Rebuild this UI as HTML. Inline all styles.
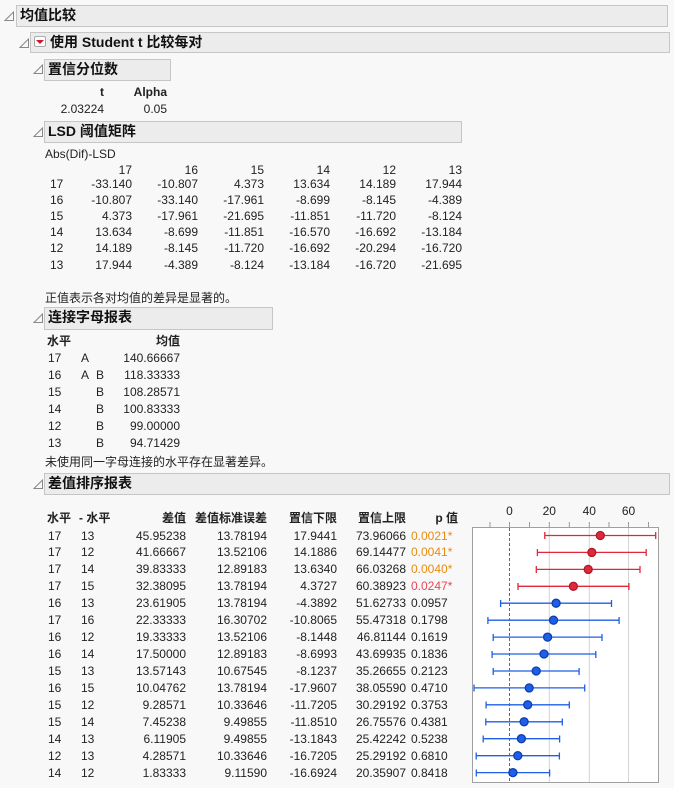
<!DOCTYPE html>
<html><head><meta charset="utf-8"><style>
*{margin:0;padding:0;box-sizing:border-box}
body{width:674px;height:788px;background:#f8f8f8;font-family:"Liberation Sans","Noto Sans CJK SC",sans-serif;font-size:12px;color:#222;position:relative;overflow:hidden}
.a{position:absolute;white-space:nowrap;line-height:16px}
.h{position:absolute;background:#ececec;border:1px solid #c6c6c6;font-weight:bold;font-size:14px;line-height:19px;padding-left:3px;color:#111}
.tri{position:absolute;width:10px;height:10px}
.r{text-align:right}
.row{position:absolute;left:0;height:16.93px;line-height:16.93px;width:470px}
.row span{position:absolute;white-space:nowrap}
.o{color:#e98b0f}.rd{color:#e8475a}
b{font-weight:bold}
</style></head><body>
<svg width="0" height="0" style="position:absolute"><defs><symbol id="t" viewBox="0 0 10 10"><path d="M1 9.5H9.5V1Z" fill="none" stroke="#888" stroke-width="1"/></symbol></defs></svg>

<svg class="tri" style="left:4px;top:11px"><use href="#t"/></svg>
<div class="h" style="left:16px;top:5px;width:652px;height:22px">均值比较</div>

<svg class="tri" style="left:19px;top:38px"><use href="#t"/></svg>
<div class="h" style="left:30px;top:32px;width:640px;height:21px;padding-left:19px">使用 Student t 比较每对</div>
<div style="position:absolute;left:34px;top:36px;width:12px;height:11px;background:#fff;border:1px solid #aaa;border-radius:2px"></div>
<div style="position:absolute;left:36px;top:40px;width:0;height:0;border-left:4px solid transparent;border-right:4px solid transparent;border-top:4px solid #d0152a"></div>

<svg class="tri" style="left:33px;top:64px"><use href="#t"/></svg>
<div class="h" style="left:44px;top:59px;width:127px;height:22px">置信分位数</div>
<div class="a r" style="left:60px;top:84px;width:44px"><b>t</b></div>
<div class="a r" style="left:110px;top:84px;width:57px"><b>Alpha</b></div>
<div class="a r" style="left:40px;top:101px;width:64px">2.03224</div>
<div class="a r" style="left:110px;top:101px;width:57px">0.05</div>

<svg class="tri" style="left:33px;top:127px"><use href="#t"/></svg>
<div class="h" style="left:44px;top:121px;width:418px;height:22px">LSD 阈值矩阵</div>
<div class="a" style="left:45px;top:146px">Abs(Dif)-LSD</div>
<div style="position:absolute;left:0;top:162px">
<div class="row"><span style="right:338px">17</span><span style="right:272px">16</span><span style="right:206px">15</span><span style="right:140px">14</span><span style="right:74px">12</span><span style="right:8px">13</span></div>
</div>
<div style="position:absolute;left:0;top:176px;line-height:16.1px">
<div class="row" style="top:0"><span style="left:50px">17</span><span style="right:338px">-33.140</span><span style="right:272px">-10.807</span><span style="right:206px">4.373</span><span style="right:140px">13.634</span><span style="right:74px">14.189</span><span style="right:8px">17.944</span></div>
<div class="row" style="top:16.1px"><span style="left:50px">16</span><span style="right:338px">-10.807</span><span style="right:272px">-33.140</span><span style="right:206px">-17.961</span><span style="right:140px">-8.699</span><span style="right:74px">-8.145</span><span style="right:8px">-4.389</span></div>
<div class="row" style="top:32.2px"><span style="left:50px">15</span><span style="right:338px">4.373</span><span style="right:272px">-17.961</span><span style="right:206px">-21.695</span><span style="right:140px">-11.851</span><span style="right:74px">-11.720</span><span style="right:8px">-8.124</span></div>
<div class="row" style="top:48.3px"><span style="left:50px">14</span><span style="right:338px">13.634</span><span style="right:272px">-8.699</span><span style="right:206px">-11.851</span><span style="right:140px">-16.570</span><span style="right:74px">-16.692</span><span style="right:8px">-13.184</span></div>
<div class="row" style="top:64.4px"><span style="left:50px">12</span><span style="right:338px">14.189</span><span style="right:272px">-8.145</span><span style="right:206px">-11.720</span><span style="right:140px">-16.692</span><span style="right:74px">-20.294</span><span style="right:8px">-16.720</span></div>
<div class="row" style="top:80.5px"><span style="left:50px">13</span><span style="right:338px">17.944</span><span style="right:272px">-4.389</span><span style="right:206px">-8.124</span><span style="right:140px">-13.184</span><span style="right:74px">-16.720</span><span style="right:8px">-21.695</span></div>
</div>
<div class="a" style="left:45px;top:290px">正值表示各对均值的差异是显著的。</div>

<svg class="tri" style="left:33px;top:313px"><use href="#t"/></svg>
<div class="h" style="left:44px;top:307px;width:229px;height:23px">连接字母报表</div>
<div style="position:absolute;left:0;top:333px">
<div class="row" style="top:0"><span style="left:47px"><b>水平</b></span><span style="right:290px"><b>均值</b></span></div>
<div class="row" style="top:16.93px"><span style="left:48px">17</span><span style="left:81px">A</span><span style="right:290px">140.66667</span></div>
<div class="row" style="top:33.86px"><span style="left:48px">16</span><span style="left:81px">A</span><span style="left:96px">B</span><span style="right:290px">118.33333</span></div>
<div class="row" style="top:50.79px"><span style="left:48px">15</span><span style="left:96px">B</span><span style="right:290px">108.28571</span></div>
<div class="row" style="top:67.72px"><span style="left:48px">14</span><span style="left:96px">B</span><span style="right:290px">100.83333</span></div>
<div class="row" style="top:84.65px"><span style="left:48px">12</span><span style="left:96px">B</span><span style="right:290px">99.00000</span></div>
<div class="row" style="top:101.58px"><span style="left:48px">13</span><span style="left:96px">B</span><span style="right:290px">94.71429</span></div>
</div>
<div class="a" style="left:45px;top:454px">未使用同一字母连接的水平存在显著差异。</div>

<svg class="tri" style="left:33px;top:479px"><use href="#t"/></svg>
<div class="h" style="left:44px;top:473px;width:626px;height:22px">差值排序报表</div>

<div style="position:absolute;left:0;top:510px">
<div class="row" style="top:0"><span style="left:47px"><b>水平</b></span><span style="left:79px"><b>- 水平</b></span><span style="right:284px"><b>差值</b></span><span style="right:203px"><b>差值标准误差</b></span><span style="right:133px"><b>置信下限</b></span><span style="right:64px"><b>置信上限</b></span><span style="right:12px"><b>p 值</b></span></div>
</div>
<div style="position:absolute;left:0;top:527.5px">
<div class="row" style="top:0"><span style="left:48px">17</span><span style="left:81px">13</span><span style="right:284px">45.95238</span><span style="right:203px">13.78194</span><span style="right:133px">17.9441</span><span style="right:64px">73.96066</span><span style="left:411px" class="o">0.0021*</span></div>
<div class="row" style="top:16.93px"><span style="left:48px">17</span><span style="left:81px">12</span><span style="right:284px">41.66667</span><span style="right:203px">13.52106</span><span style="right:133px">14.1886</span><span style="right:64px">69.14477</span><span style="left:411px" class="o">0.0041*</span></div>
<div class="row" style="top:33.86px"><span style="left:48px">17</span><span style="left:81px">14</span><span style="right:284px">39.83333</span><span style="right:203px">12.89183</span><span style="right:133px">13.6340</span><span style="right:64px">66.03268</span><span style="left:411px" class="o">0.0040*</span></div>
<div class="row" style="top:50.79px"><span style="left:48px">17</span><span style="left:81px">15</span><span style="right:284px">32.38095</span><span style="right:203px">13.78194</span><span style="right:133px">4.3727</span><span style="right:64px">60.38923</span><span style="left:411px" class="rd">0.0247*</span></div>
<div class="row" style="top:67.72px"><span style="left:48px">16</span><span style="left:81px">13</span><span style="right:284px">23.61905</span><span style="right:203px">13.78194</span><span style="right:133px">-4.3892</span><span style="right:64px">51.62733</span><span style="left:411px">0.0957</span></div>
<div class="row" style="top:84.65px"><span style="left:48px">17</span><span style="left:81px">16</span><span style="right:284px">22.33333</span><span style="right:203px">16.30702</span><span style="right:133px">-10.8065</span><span style="right:64px">55.47318</span><span style="left:411px">0.1798</span></div>
<div class="row" style="top:101.58px"><span style="left:48px">16</span><span style="left:81px">12</span><span style="right:284px">19.33333</span><span style="right:203px">13.52106</span><span style="right:133px">-8.1448</span><span style="right:64px">46.81144</span><span style="left:411px">0.1619</span></div>
<div class="row" style="top:118.51px"><span style="left:48px">16</span><span style="left:81px">14</span><span style="right:284px">17.50000</span><span style="right:203px">12.89183</span><span style="right:133px">-8.6993</span><span style="right:64px">43.69935</span><span style="left:411px">0.1836</span></div>
<div class="row" style="top:135.44px"><span style="left:48px">15</span><span style="left:81px">13</span><span style="right:284px">13.57143</span><span style="right:203px">10.67545</span><span style="right:133px">-8.1237</span><span style="right:64px">35.26655</span><span style="left:411px">0.2123</span></div>
<div class="row" style="top:152.37px"><span style="left:48px">16</span><span style="left:81px">15</span><span style="right:284px">10.04762</span><span style="right:203px">13.78194</span><span style="right:133px">-17.9607</span><span style="right:64px">38.05590</span><span style="left:411px">0.4710</span></div>
<div class="row" style="top:169.3px"><span style="left:48px">15</span><span style="left:81px">12</span><span style="right:284px">9.28571</span><span style="right:203px">10.33646</span><span style="right:133px">-11.7205</span><span style="right:64px">30.29192</span><span style="left:411px">0.3753</span></div>
<div class="row" style="top:186.23px"><span style="left:48px">15</span><span style="left:81px">14</span><span style="right:284px">7.45238</span><span style="right:203px">9.49855</span><span style="right:133px">-11.8510</span><span style="right:64px">26.75576</span><span style="left:411px">0.4381</span></div>
<div class="row" style="top:203.16px"><span style="left:48px">14</span><span style="left:81px">13</span><span style="right:284px">6.11905</span><span style="right:203px">9.49855</span><span style="right:133px">-13.1843</span><span style="right:64px">25.42242</span><span style="left:411px">0.5238</span></div>
<div class="row" style="top:220.09px"><span style="left:48px">12</span><span style="left:81px">13</span><span style="right:284px">4.28571</span><span style="right:203px">10.33646</span><span style="right:133px">-16.7205</span><span style="right:64px">25.29192</span><span style="left:411px">0.6810</span></div>
<div class="row" style="top:237.02px"><span style="left:48px">14</span><span style="left:81px">12</span><span style="right:284px">1.83333</span><span style="right:203px">9.11590</span><span style="right:133px">-16.6924</span><span style="right:64px">20.35907</span><span style="left:411px">0.8418</span></div>
</div>

<svg style="position:absolute;left:0;top:0" width="674" height="788">
<rect x="472.5" y="527.5" width="186" height="255" fill="#fff" stroke="#a0a0a0"/>
<g stroke="#d4d4d4"><line x1="549.3" y1="528" x2="549.3" y2="782"/><line x1="589.3" y1="528" x2="589.3" y2="782"/><line x1="628.5" y1="528" x2="628.5" y2="782"/></g>
<line x1="509.5" y1="528" x2="509.5" y2="782" stroke="#666" stroke-dasharray="3,2"/>
<g stroke="#999"><line x1="490" y1="522" x2="490" y2="527"/><line x1="509.5" y1="522" x2="509.5" y2="527"/><line x1="529.5" y1="522" x2="529.5" y2="527"/><line x1="549.3" y1="522" x2="549.3" y2="527"/><line x1="569.3" y1="522" x2="569.3" y2="527"/><line x1="589.3" y1="522" x2="589.3" y2="527"/><line x1="609" y1="522" x2="609" y2="527"/><line x1="628.5" y1="522" x2="628.5" y2="527"/><line x1="648.5" y1="522" x2="648.5" y2="527"/></g>
<g font-family="Liberation Sans,sans-serif" font-size="12" fill="#222" text-anchor="middle"><text x="509.5" y="515">0</text><text x="549.3" y="515">20</text><text x="589.3" y="515">40</text><text x="628.5" y="515">60</text></g>
<g stroke="#e0283c" stroke-width="1.3" fill="#e0283c">
<path d="M544.8 535.5H655.7M544.8 532v7M655.7 532v7"/><circle cx="600.3" cy="535.5" r="4" stroke="#b01828"/>
<path d="M537.4 552.4H646.2M537.4 549v7M646.2 549v7"/><circle cx="591.8" cy="552.4" r="4" stroke="#b01828"/>
<path d="M536.3 569.4H640M536.3 566v7M640 566v7"/><circle cx="588.2" cy="569.4" r="4" stroke="#b01828"/>
<path d="M518 586.3H628.9M518 583v7M628.9 583v7"/><circle cx="573.4" cy="586.3" r="4" stroke="#b01828"/>
</g>
<g stroke="#1f5fe8" stroke-width="1.3" fill="#1f5fe8">
<path d="M500.6 603.2H611.5M500.6 600v7M611.5 600v7"/><circle cx="556.1" cy="603.2" r="4" stroke="#0c3fb0"/>
<path d="M487.9 620.2H619.1M487.9 617v7M619.1 617v7"/><circle cx="553.5" cy="620.2" r="4" stroke="#0c3fb0"/>
<path d="M493.2 637.1H602M493.2 634v7M602 634v7"/><circle cx="547.6" cy="637.1" r="4" stroke="#0c3fb0"/>
<path d="M492.1 654H595.8M492.1 651v7M595.8 651v7"/><circle cx="544" cy="654" r="4" stroke="#0c3fb0"/>
<path d="M493.2 671H579.1M493.2 668v7M579.1 668v7"/><circle cx="536.2" cy="671" r="4" stroke="#0c3fb0"/>
<path d="M474 687.9H584.7M474 684.5v7M584.7 684.5v7"/><circle cx="529.2" cy="687.9" r="4" stroke="#0c3fb0"/>
<path d="M486.1 704.8H569.3M486.1 701.5v7M569.3 701.5v7"/><circle cx="527.7" cy="704.8" r="4" stroke="#0c3fb0"/>
<path d="M485.8 721.8H562.3M485.8 718.5v7M562.3 718.5v7"/><circle cx="524.1" cy="721.8" r="4" stroke="#0c3fb0"/>
<path d="M483.2 738.7H559.6M483.2 735.5v7M559.6 735.5v7"/><circle cx="521.4" cy="738.7" r="4" stroke="#0c3fb0"/>
<path d="M476.2 755.7H559.4M476.2 752.5v7M559.4 752.5v7"/><circle cx="517.8" cy="755.7" r="4" stroke="#0c3fb0"/>
<path d="M476.3 772.6H549.6M476.3 769.5v7M549.6 769.5v7"/><circle cx="512.9" cy="772.6" r="4" stroke="#0c3fb0"/>
</g>
</svg>
</body></html>
